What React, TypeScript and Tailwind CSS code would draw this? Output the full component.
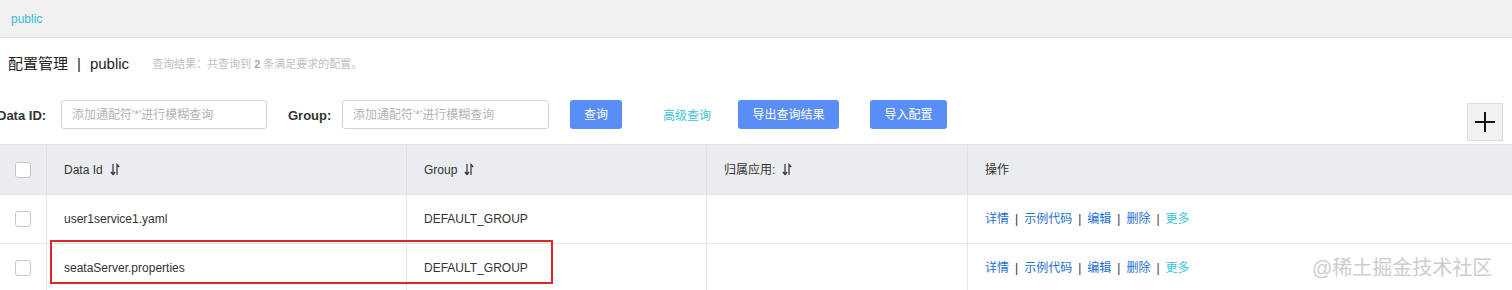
import { FC } from 'react';

const SortIcon: FC = () => (
  <svg width="10" height="13" viewBox="0 0 10 13" className="inline-block ml-[7px]">
    <path d="M3 1 V11.5 M0.8 9 L3 11.5 L5.2 9" fill="none" stroke="#333" strokeWidth="1.2" />
    <path d="M7 12 V1.5 L9.2 4" fill="none" stroke="#333" strokeWidth="1.2" />
  </svg>
);

const Checkbox: FC = () => (
  <span className="block w-4 h-4 rounded-[3px] border border-[#c4c6cf] bg-white" />
);

const Actions: FC = () => (
  <div className="flex items-center text-[12px] text-[#1e6fd0]">
    <span>详情</span>
    <span className="mx-[6px] text-[#333]">|</span>
    <span>示例代码</span>
    <span className="mx-[6px] text-[#333]">|</span>
    <span>编辑</span>
    <span className="mx-[6px] text-[#333]">|</span>
    <span>删除</span>
    <span className="mx-[6px] text-[#333]">|</span>
    <span className="text-[#39c5d9]">更多</span>
  </div>
);

const rows = [
  { dataId: 'user1service1.yaml', group: 'DEFAULT_GROUP', app: '' },
  { dataId: 'seataServer.properties', group: 'DEFAULT_GROUP', app: '' },
];

const App: FC = () => {
  return (
    <div className="relative w-[1512px] h-[290px] overflow-hidden bg-white text-[#333] font-['Liberation_Sans','Noto_Sans_CJK_SC',sans-serif]">
      <div className="h-[38px] bg-[#f0f0f0] border-b border-[#e0e0e0] flex items-center pl-[11px]">
        <span className="text-[12px] text-[#35c1dc]">public</span>
      </div>

      <div className="flex items-center h-[52px] pl-[8px]">
        <span className="text-[15px] text-[#222]">配置管理</span>
        <span className="text-[15px] text-[#222] mx-[9px]">|</span>
        <span className="text-[15px] text-[#222]">public</span>
        <span className="ml-[23px] text-[11px] text-[#c0c0c0]">
          查询结果：共查询到 <b className="text-[#aaa]">2</b> 条满足要求的配置。
        </span>
      </div>

      <div className="flex items-start h-[54px] pt-[10px]">
        <span className="ml-[-3px] w-[51px] mt-[6px] text-[13px] font-bold text-[#333] whitespace-nowrap">Data ID:</span>
        <div className="ml-[13px] w-[206px] h-[29px] border border-[#d4d4d4] rounded-[3px] flex items-center pl-[10px] text-[12px] text-[#b4b4b4]">
          添加通配符'*'进行模糊查询
        </div>
        <span className="ml-[21px] w-[42px] mt-[6px] text-[13px] font-bold text-[#333] whitespace-nowrap">Group:</span>
        <div className="ml-[12px] w-[207px] h-[29px] border border-[#d4d4d4] rounded-[3px] flex items-center pl-[10px] text-[12px] text-[#b4b4b4]">
          添加通配符'*'进行模糊查询
        </div>
        <button className="ml-[21px] w-[52px] h-[29px] rounded-[3px] bg-[#5a8ef7] text-white text-[12px]">查询</button>
        <span className="ml-[41px] w-[49px] mt-[7px] text-[12px] text-[#39c5d9] whitespace-nowrap">高级查询</span>
        <button className="ml-[26px] w-[101px] h-[29px] rounded-[3px] bg-[#5a8ef7] text-white text-[12px]">导出查询结果</button>
        <button className="ml-[31px] w-[77px] h-[29px] rounded-[3px] bg-[#5a8ef7] text-white text-[12px]">导入配置</button>
        <div className="ml-auto mr-[9px] mt-[3px] w-[36px] h-[38px] bg-[#f1f1f1] border border-[#dedede] flex items-center justify-center">
          <svg width="22" height="22" viewBox="0 0 22 22">
            <path d="M11 1 V21 M1 11 H21" stroke="#111" strokeWidth="2" />
          </svg>
        </div>
      </div>

      <div className="border-t border-[#e3e4e8]">
        <div className="grid grid-cols-[47px_360px_300px_261px_1fr] h-[49px] bg-[#ebecf0] text-[12px] text-[#333]">
          <div className="flex items-center justify-center border-r border-[#dfe0e4]">
            <Checkbox />
          </div>
          <div className="flex items-center pl-[17px] border-r border-[#dfe0e4]">
            Data Id
            <SortIcon />
          </div>
          <div className="flex items-center pl-[17px] border-r border-[#dfe0e4]">
            Group
            <SortIcon />
          </div>
          <div className="flex items-center pl-[17px] border-r border-[#dfe0e4]">
            归属应用:
            <SortIcon />
          </div>
          <div className="flex items-center pl-[17px]">操作</div>
        </div>
        {rows.map((r) => (
          <div
            key={r.dataId}
            className="grid grid-cols-[47px_360px_300px_261px_1fr] h-[49px] border-t border-[#e6e6e6] text-[12px] text-[#333]"
          >
            <div className="flex items-center justify-center border-r border-[#e6e6e6]">
              <Checkbox />
            </div>
            <div className="flex items-center pl-[17px] border-r border-[#e6e6e6]">{r.dataId}</div>
            <div className="flex items-center pl-[17px] border-r border-[#e6e6e6]">{r.group}</div>
            <div className="flex items-center pl-[17px] border-r border-[#e6e6e6]">{r.app}</div>
            <div className="flex items-center pl-[17px]">
              <Actions />
            </div>
          </div>
        ))}
      </div>

      <div className="absolute left-[50px] top-[240px] w-[503px] h-[44px] border-2 border-[#e0262b]" />
      <div className="absolute left-[1312px] top-[253px] text-[20px] text-[#c8c8c8] opacity-90">@稀土掘金技术社区</div>
    </div>
  );
};

export default App;
